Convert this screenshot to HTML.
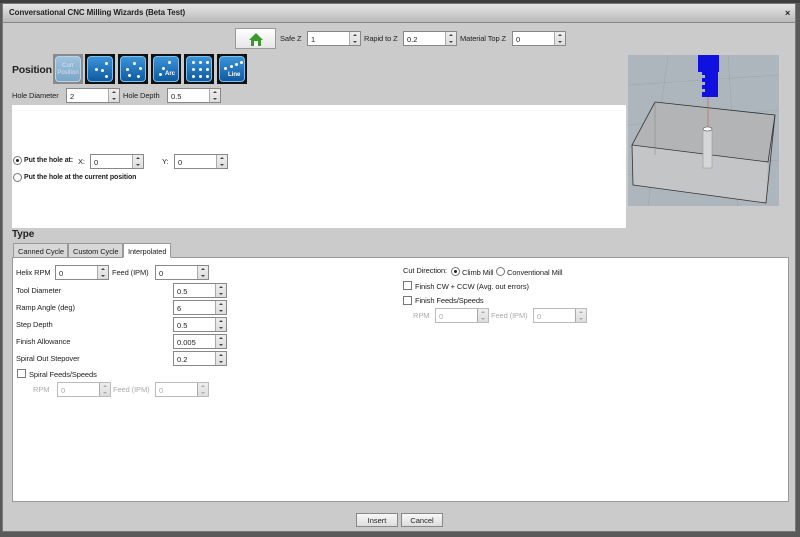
<!DOCTYPE html>
<html><head><meta charset="utf-8">
<style>
*{box-sizing:border-box;margin:0;padding:0}
body{width:800px;height:537px;overflow:hidden;background:#5a5a5a;font-family:"Liberation Sans",Arial,sans-serif;font-size:7.5px;color:#222;position:relative}
.a{position:absolute}
.dlg{left:2px;top:3px;width:794px;height:529px;background:#cbcbcb;border:1px solid #777}
.title{left:3px;top:4px;width:792px;height:19px;background:linear-gradient(#e6e6e6,#b9b9b9);border-bottom:1px solid #888;font-weight:bold;font-size:8px;padding:4px 0 0 6px;letter-spacing:-0.1px}
.lbl{position:absolute;font-size:7.5px;white-space:nowrap;letter-spacing:-0.1px}
.sp{position:absolute;height:15px;background:#fff;border:1px solid #888;font-size:7.5px;padding:3px 0 0 3px}
.sp::after{content:"";position:absolute;right:0;top:0;width:10px;height:13px;border-left:1px solid #aaa;background:linear-gradient(#eee,#ddd)}
.sp i{position:absolute;right:3px;width:0;height:0;border-left:2px solid transparent;border-right:2px solid transparent;z-index:2}
.sp i.u{top:2px;border-bottom:2px solid #444}
.sp i.d{bottom:2px;border-top:2px solid #444}
.sp.dis{color:#aaa;border-color:#bbb}
.sp.dis i.u{border-bottom-color:#aaa}.sp.dis i.d{border-top-color:#aaa}
.btn{position:absolute;width:30px;height:30px;background:#111;padding:2px}
.btn div{width:26px;height:26px;border-radius:4px;background:linear-gradient(#3b93d8,#0f5aa0);border:1px solid #7cc0f0;position:relative;color:#fff;font-size:6px;font-weight:bold;text-align:center}
.dot{position:absolute;width:3px;height:3px;border-radius:50%;background:#fff}
.rad{position:absolute;width:9px;height:9px;border-radius:50%;border:1px solid #777;background:#fff}
.rad.on::after{content:"";position:absolute;left:2px;top:2px;width:3px;height:3px;border-radius:50%;background:#222}
.cb{position:absolute;width:9px;height:9px;border:1px solid #777;background:#fff}
.tab{position:absolute;top:243px;height:15px;border:1px solid #999;background:#d8d8d8;font-size:7.5px;padding:3px 0 0 4px;white-space:nowrap;letter-spacing:-0.1px}
.pb{position:absolute;height:14px;border:1px solid #888;background:linear-gradient(#f8f8f8,#ddd);font-size:7.5px;text-align:center;padding-top:2px}
</style></head><body>
<div class="a" style="left:0;top:0;width:800px;height:3px;background:#3e3e3e"></div>
<div class="a dlg"></div>
<div class="a title">Conversational CNC Milling Wizards (Beta Test)</div>
<div class="a" style="left:785px;top:8px;font-size:9px;font-weight:bold">×</div>

<div class="a" style="left:235px;top:28px;width:41px;height:21px;border:1px solid #999;background:linear-gradient(#fff,#e6e6e6)">
<svg width="41" height="21" style="position:absolute;left:0;top:0"><polygon points="20,4 13,11 15,11 15,17 25,17 25,11 27,11" fill="#3a9a2c"/><rect x="18" y="12" width="4" height="5" fill="#fff"/></svg></div>
<div class="lbl" style="left:280px;top:34px">Safe Z</div>
<div class="sp" style="left:307px;top:31px;width:54px">1<i class="u"></i><i class="d"></i></div>
<div class="lbl" style="left:364px;top:34px">Rapid to Z</div>
<div class="sp" style="left:403px;top:31px;width:54px">0.2<i class="u"></i><i class="d"></i></div>
<div class="lbl" style="left:460px;top:34px">Material Top Z</div>
<div class="sp" style="left:512px;top:31px;width:54px">0<i class="u"></i><i class="d"></i></div>

<div class="lbl" style="left:12px;top:64px;font-size:10.5px;font-weight:bold;letter-spacing:-0.2px">Position</div>
<div class="btn" style="left:53px;top:54px;background:#8a8a8a"><div style="background:linear-gradient(#9fc3df,#7aa6c8);border-color:#b8d4ea;color:#dde;font-weight:normal;padding-top:6px;line-height:7px">Curr<br>Position</div></div>
<div class="btn" style="left:85px;top:54px"><div><span class="dot" style="left:17px;top:5px"></span><span class="dot" style="left:7px;top:11px"></span><span class="dot" style="left:13px;top:12px"></span><span class="dot" style="left:17px;top:18px"></span></div></div>
<div class="btn" style="left:118px;top:54px"><div><span class="dot" style="left:12px;top:5px"></span><span class="dot" style="left:5px;top:11px"></span><span class="dot" style="left:18px;top:10px"></span><span class="dot" style="left:7px;top:17px"></span><span class="dot" style="left:16px;top:18px"></span></div></div>
<div class="btn" style="left:151px;top:54px"><div><span class="dot" style="left:14px;top:4px"></span><span class="dot" style="left:8px;top:10px"></span><span class="dot" style="left:5px;top:16px"></span><span style="position:absolute;left:11px;top:14px">Arc</span></div></div>
<div class="btn" style="left:184px;top:54px"><div><span class="dot" style="left:5px;top:4px"></span><span class="dot" style="left:12px;top:4px"></span><span class="dot" style="left:19px;top:4px"></span><span class="dot" style="left:5px;top:11px"></span><span class="dot" style="left:12px;top:11px"></span><span class="dot" style="left:19px;top:11px"></span><span class="dot" style="left:5px;top:18px"></span><span class="dot" style="left:12px;top:18px"></span><span class="dot" style="left:19px;top:18px"></span></div></div>
<div class="btn" style="left:217px;top:54px"><div><span class="dot" style="left:4px;top:10px"></span><span class="dot" style="left:10px;top:8px"></span><span class="dot" style="left:15px;top:6px"></span><span class="dot" style="left:20px;top:4px"></span><span style="position:absolute;left:8px;top:15px">Line</span></div></div>

<div class="lbl" style="left:12px;top:91px">Hole Diameter</div>
<div class="sp" style="left:66px;top:88px;width:54px">2<i class="u"></i><i class="d"></i></div>
<div class="lbl" style="left:123px;top:91px">Hole Depth</div>
<div class="sp" style="left:167px;top:88px;width:54px">0.5<i class="u"></i><i class="d"></i></div>

<div class="a" style="left:12px;top:105px;width:614px;height:123px;background:#fff"></div>
<div class="rad on" style="left:13px;top:156px"></div>
<div class="lbl" style="left:24px;top:157px;font-weight:bold;font-size:7px">Put the hole at:</div>
<div class="lbl" style="left:78px;top:157px">X:</div>
<div class="sp" style="left:90px;top:154px;width:54px">0<i class="u"></i><i class="d"></i></div>
<div class="lbl" style="left:162px;top:157px">Y:</div>
<div class="sp" style="left:174px;top:154px;width:54px">0<i class="u"></i><i class="d"></i></div>
<div class="rad" style="left:13px;top:173px"></div>
<div class="lbl" style="left:24px;top:174px;font-weight:bold;font-size:7px">Put the hole at the current position</div>

<svg class="a" style="left:628px;top:55px" width="151" height="151">
<rect width="151" height="151" fill="#aeb6bd"/>
<g stroke="#9ea6ad" stroke-width="0.6"><line x1="0" y1="30" x2="151" y2="20"/><line x1="0" y1="70" x2="151" y2="55"/><line x1="0" y1="120" x2="151" y2="105"/><line x1="40" y1="0" x2="20" y2="151"/><line x1="100" y1="0" x2="110" y2="151"/></g>
<polygon points="27,47 147,60 140,107 4,90" fill="#b4b4b4" opacity="0.85"/>
<polygon points="4,90 140,107 138,148 5,130" fill="#c6c7c8" opacity="0.9"/>
<g fill="none" stroke="#333" stroke-width="0.8"><polyline points="27,47 147,60 138,148 5,130 4,90 27,47"/><polyline points="4,90 140,107 147,60"/></g>
<g fill="none" stroke="#777" stroke-width="0.4"><line x1="27" y1="47" x2="27" y2="100"/></g>
<line x1="80" y1="42" x2="80" y2="74" stroke="#c44" stroke-width="0.5"/>
<rect x="75" y="74" width="9" height="39" fill="#d6d6d6" stroke="#999" stroke-width="0.6"/>
<ellipse cx="79.5" cy="74" rx="4.5" ry="2" fill="#fff" stroke="#555" stroke-width="0.6"/>
<rect x="70" y="0" width="21" height="17" fill="#1010e0"/>
<rect x="74" y="17" width="16" height="25" fill="#1010e0"/>
<g fill="#aeb6bd"><rect x="74" y="20" width="3" height="3"/><rect x="74" y="27" width="3" height="3"/><rect x="74" y="34" width="3" height="3"/></g>
</svg>

<div class="lbl" style="left:12px;top:229px;font-size:10px;font-weight:bold">Type</div>
<div class="tab" style="left:13px;width:55px">Canned Cycle</div>
<div class="tab" style="left:68px;width:55px">Custom Cycle</div>
<div class="a" style="left:12px;top:257px;width:777px;height:245px;background:#fff;border:1px solid #999"></div>
<div class="tab" style="left:123px;width:48px;background:#fff;border-bottom-color:#fff">Interpolated</div>

<div class="lbl" style="left:16px;top:268px">Helix RPM</div>
<div class="sp" style="left:55px;top:265px;width:54px">0<i class="u"></i><i class="d"></i></div>
<div class="lbl" style="left:112px;top:268px">Feed (IPM)</div>
<div class="sp" style="left:155px;top:265px;width:54px">0<i class="u"></i><i class="d"></i></div>
<div class="lbl" style="left:16px;top:286px">Tool Diameter</div>
<div class="sp" style="left:173px;top:283px;width:54px">0.5<i class="u"></i><i class="d"></i></div>
<div class="lbl" style="left:16px;top:303px">Ramp Angle (deg)</div>
<div class="sp" style="left:173px;top:300px;width:54px">6<i class="u"></i><i class="d"></i></div>
<div class="lbl" style="left:16px;top:320px">Step Depth</div>
<div class="sp" style="left:173px;top:317px;width:54px">0.5<i class="u"></i><i class="d"></i></div>
<div class="lbl" style="left:16px;top:337px">Finish Allowance</div>
<div class="sp" style="left:173px;top:334px;width:54px">0.005<i class="u"></i><i class="d"></i></div>
<div class="lbl" style="left:16px;top:354px">Spiral Out Stepover</div>
<div class="sp" style="left:173px;top:351px;width:54px">0.2<i class="u"></i><i class="d"></i></div>
<div class="cb" style="left:17px;top:369px"></div>
<div class="lbl" style="left:29px;top:370px">Spiral Feeds/Speeds</div>
<div class="lbl" style="left:33px;top:385px;color:#aaa">RPM</div>
<div class="sp dis" style="left:57px;top:382px;width:54px">0<i class="u"></i><i class="d"></i></div>
<div class="lbl" style="left:113px;top:385px;color:#aaa">Feed (IPM)</div>
<div class="sp dis" style="left:155px;top:382px;width:54px">0<i class="u"></i><i class="d"></i></div>

<div class="lbl" style="left:403px;top:266px">Cut Direction:</div>
<div class="rad on" style="left:451px;top:267px"></div>
<div class="lbl" style="left:462px;top:268px">Climb Mill</div>
<div class="rad" style="left:496px;top:267px"></div>
<div class="lbl" style="left:507px;top:268px">Conventional Mill</div>
<div class="cb" style="left:403px;top:281px"></div>
<div class="lbl" style="left:415px;top:282px">Finish CW + CCW (Avg. out errors)</div>
<div class="cb" style="left:403px;top:296px"></div>
<div class="lbl" style="left:415px;top:296px">Finish Feeds/Speeds</div>
<div class="lbl" style="left:413px;top:311px;color:#aaa">RPM</div>
<div class="sp dis" style="left:435px;top:308px;width:54px">0<i class="u"></i><i class="d"></i></div>
<div class="lbl" style="left:491px;top:311px;color:#aaa">Feed (IPM)</div>
<div class="sp dis" style="left:533px;top:308px;width:54px">0<i class="u"></i><i class="d"></i></div>

<div class="pb" style="left:356px;top:513px;width:42px">Insert</div>
<div class="pb" style="left:401px;top:513px;width:42px">Cancel</div>
</body></html>
